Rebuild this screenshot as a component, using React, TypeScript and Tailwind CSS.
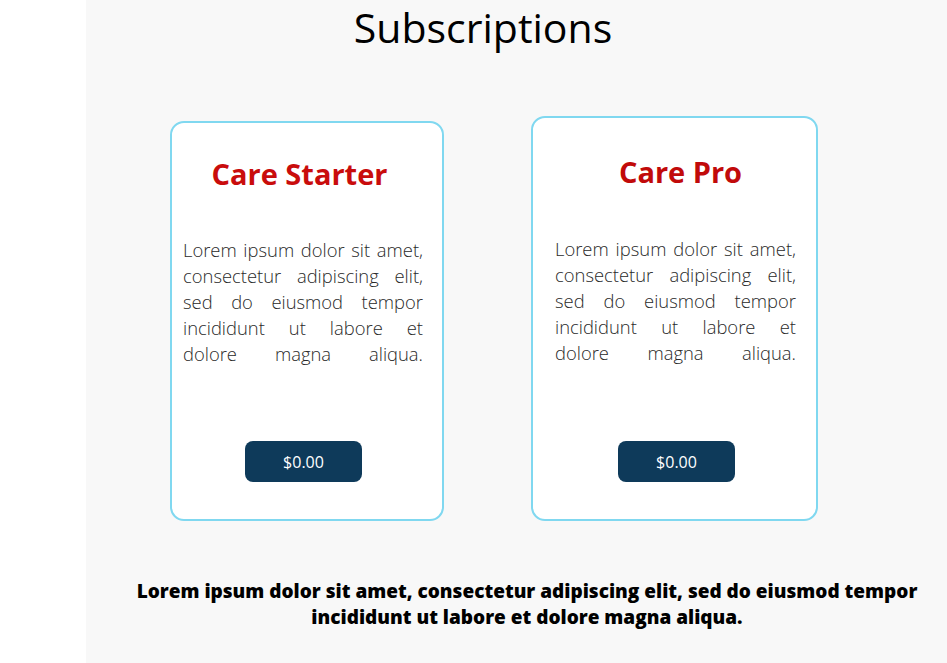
import React from "react";

const lorem =
  "Lorem ipsum dolor sit amet, consectetur adipiscing elit, sed do eiusmod tempor incididunt ut labore et dolore magna aliqua.";

const App: React.FC = () => {
  return (
    <div className="flex h-[663px] w-[947px] overflow-hidden bg-white font-['Open_Sans',sans-serif]">
      <div className="w-[86px] shrink-0 bg-white" />
      <main className="flex-1 bg-[#f8f8f8]">
        <h1 className="pr-[67px] text-center text-[41px] leading-[54px] font-normal text-black">
          Subscriptions
        </h1>

        <div className="mt-[62px] flex items-end gap-[87px] pl-[84px]">
          <div className="h-[400px] w-[274px] rounded-[14px] border-2 border-[#80d8f0] bg-white pt-[33px]">
            <h2 className="pr-[15px] text-center text-[29px] leading-[36px] font-bold text-[#c90c0c]">
              Care Starter
            </h2>
            <p className="mt-[45px] ml-[11px] w-[240px] text-justify text-[18.4px] leading-[26px] font-light text-[#2a2a2a] [text-align-last:justify]">
              {lorem}
            </p>
            <button className="mt-[74px] ml-[73px] h-[41px] w-[117px] rounded-[8px] bg-[#0e3a5a] text-[16px] text-white">
              $0.00
            </button>
          </div>

          <div className="h-[405px] w-[287px] rounded-[14px] border-2 border-[#80d8f0] bg-white pt-[36px]">
            <h2 className="pl-[12px] text-center text-[29px] leading-[36px] font-bold text-[#c10a0a]">
              Care Pro
            </h2>
            <p className="mt-[46px] ml-[22px] w-[241px] text-justify text-[18.4px] leading-[26px] font-light text-[#2a2a2a] [text-align-last:justify]">
              {lorem}
            </p>
            <button className="mt-[75px] ml-[85px] h-[41px] w-[117px] rounded-[8px] bg-[#0e3a5a] text-[16px] text-white">
              $0.00
            </button>
          </div>
        </div>

        <p className="mt-[57px] ml-[46px] w-[790px] text-center text-[19px] leading-[26px] font-extrabold text-black">
          {lorem}
        </p>
      </main>
    </div>
  );
};

export default App;
